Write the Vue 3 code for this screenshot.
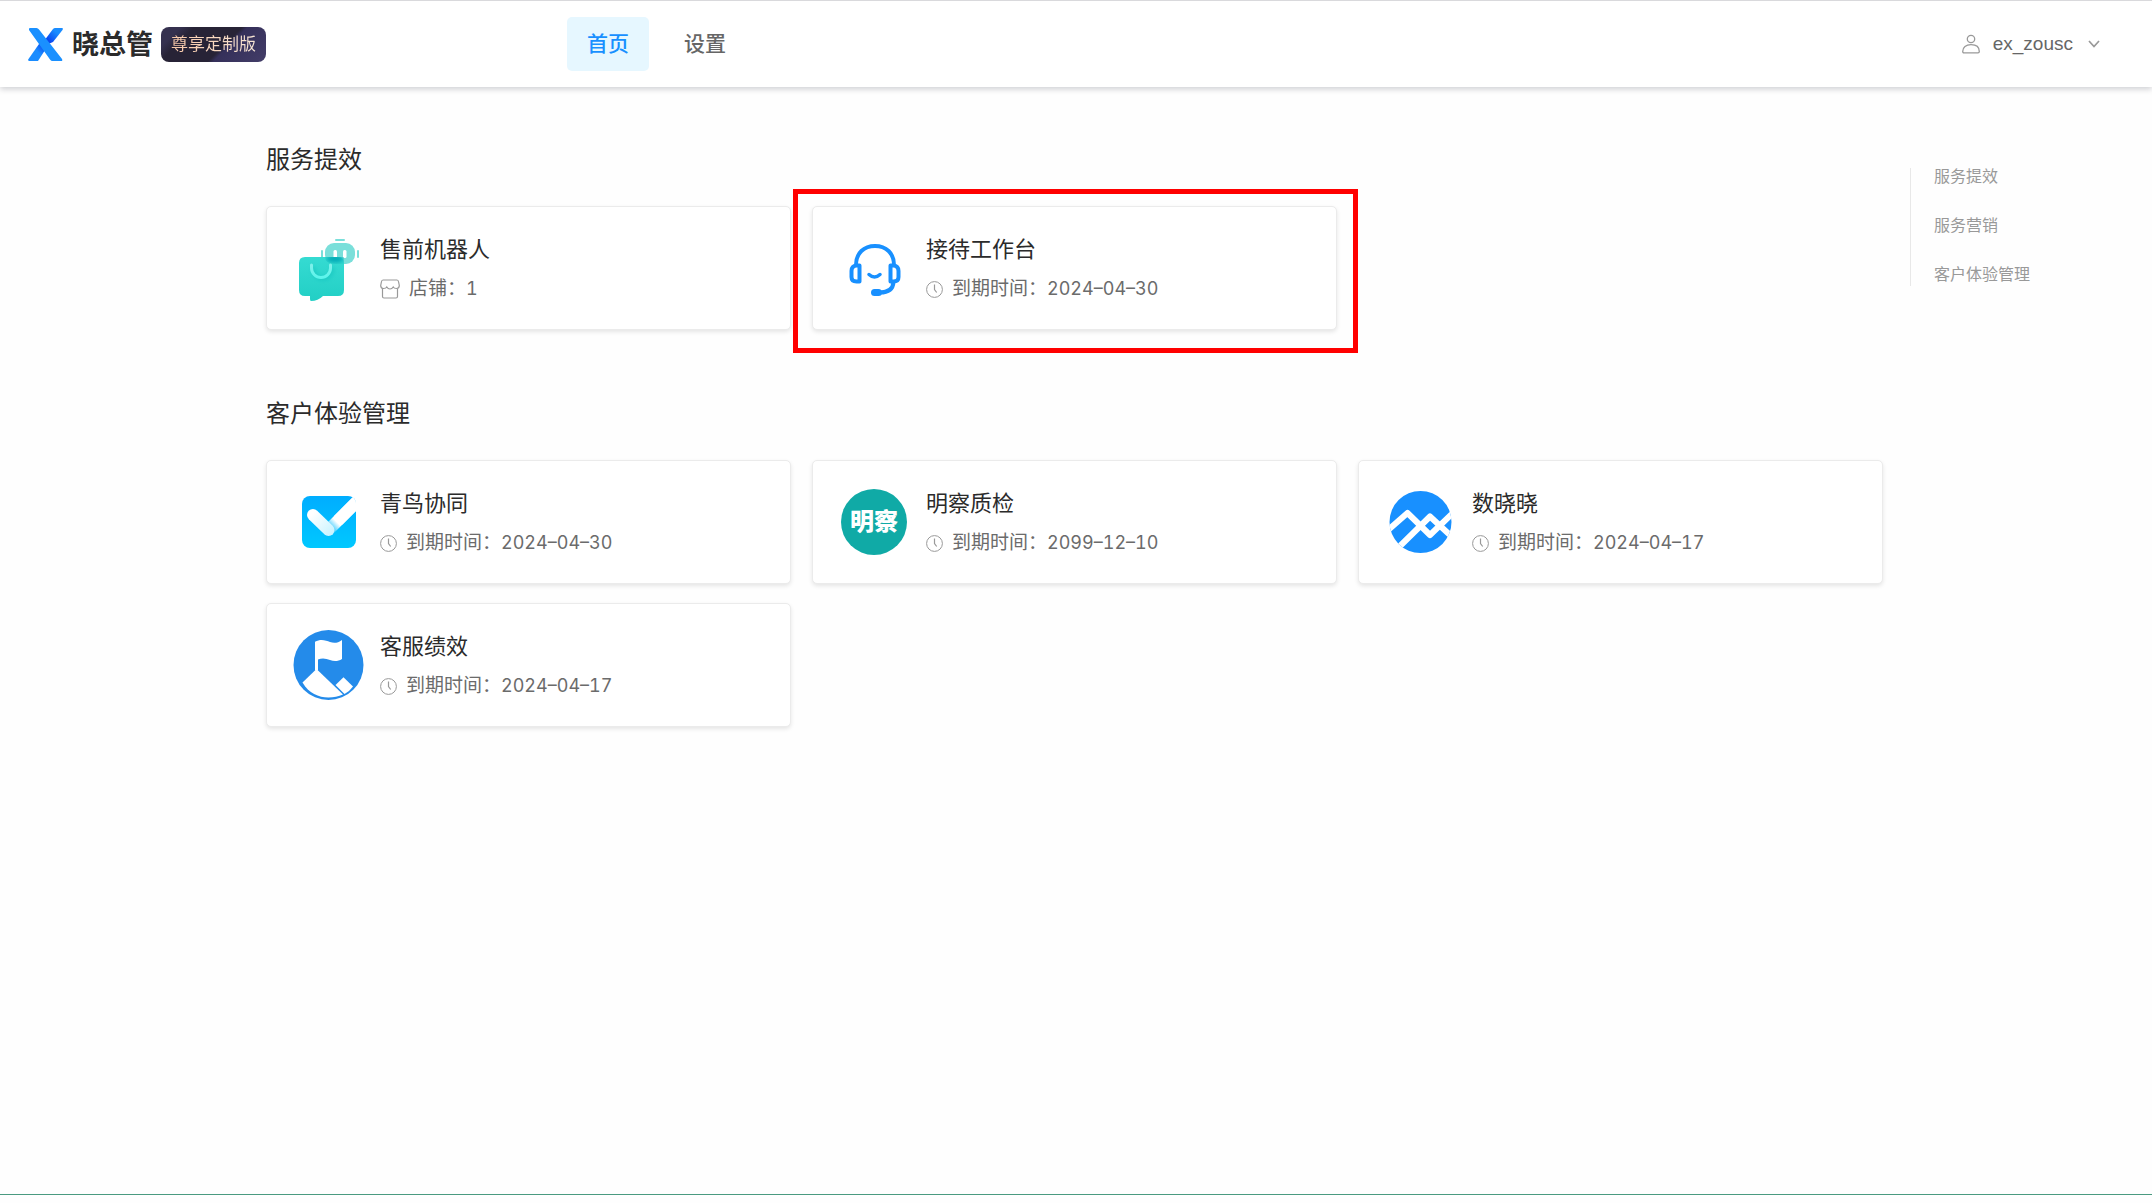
<script setup>
import { ref } from 'vue'

const sections = [
  {
    id: 'service',
    title: '服务提效',
    cards: [
      { icon: 'robot', name: '售前机器人', kind: 'shop', label: '店铺：', value: '1' },
      { icon: 'headset', name: '接待工作台', kind: 'clock', label: '到期时间：', value: '2024–04–30', marked: true },
    ],
  },
  {
    id: 'experience',
    title: '客户体验管理',
    cards: [
      { icon: 'check', name: '青鸟协同', kind: 'clock', label: '到期时间：', value: '2024–04–30' },
      { icon: 'mingcha', name: '明察质检', kind: 'clock', label: '到期时间：', value: '2099–12–10' },
      { icon: 'data', name: '数晓晓', kind: 'clock', label: '到期时间：', value: '2024–04–17' },
      { icon: 'flag', name: '客服绩效', kind: 'clock', label: '到期时间：', value: '2024–04–17' },
    ],
  },
]

const anchors = [
  { id: 'service', text: '服务提效' },
  { id: 'marketing', text: '服务营销' },
  { id: 'experience', text: '客户体验管理' },
]

const tabs = ['首页', '设置']
const activeTab = ref('首页')
</script>

<template>
  <div class="page">
    <header class="header">
      <div class="brand">
        <svg class="brand-mark" viewBox="0 0 35 33" aria-hidden="true">
          <defs>
            <linearGradient id="armUp" x1="1" y1="0" x2="0" y2="1">
              <stop offset="0.3" stop-color="#1a8cff" />
              <stop offset="0.75" stop-color="#0a45f0" />
            </linearGradient>
            <linearGradient id="armDown" x1="1" y1="0" x2="0" y2="1">
              <stop offset="0.15" stop-color="#0a45f0" />
              <stop offset="0.5" stop-color="#1a8cff" />
            </linearGradient>
          </defs>
          <path d="M25 1Q26 0 27 0H34Q35.500 0 34.500 2L25 14L18 17L16 13Z" fill="url(#armUp)" />
          <path d="M10 33H1Q-0.500 32.500 0.500 31L11 16L18 14L19 19Z" fill="url(#armDown)" />
          <path d="M2 0H8.500Q10 0 11 1.500L34 31Q35 33 33 33H24.500Q23 33 22 31.500L1 2Q0.500 0 2 0Z" fill="#1a90ff" />
        </svg>
        <span class="brand-name">晓总管</span>
        <span class="badge"><span class="badge-text">尊享定制版</span></span>
      </div>
      <nav class="tabs" aria-label="主导航">
        <button
          v-for="tab in tabs"
          :key="tab"
          type="button"
          class="tab"
          :class="{ active: tab === activeTab }"
          @click="activeTab = tab"
        >{{ tab }}</button>
      </nav>
      <button type="button" class="user">
        <svg class="user-icon" viewBox="0 0 18 20" fill="none" stroke="#999" stroke-width="1.3" aria-hidden="true">
          <circle cx="9" cy="5" r="3.700" />
          <path d="M2 18.800Q0.700 18.800 0.700 17.500C0.700 13 4 10.700 9 10.700S17.300 13 17.300 17.500Q17.300 18.800 16 18.800Z" />
        </svg>
        <span>ex_zousc</span>
        <svg class="chevron" viewBox="0 0 12 8" fill="none" stroke="#999" stroke-width="1.700" aria-hidden="true">
          <path d="M1 1L6 6.500L11 1" />
        </svg>
      </button>
    </header>

    <div class="body">
      <main class="main">
        <section v-for="section in sections" :id="section.id" :key="section.id" class="section">
          <h2 class="section-title">{{ section.title }}</h2>
          <div class="grid">
            <a
              v-for="card in section.cards"
              :key="card.name"
              href="#"
              class="card"
              :class="{ marked: card.marked }"
            >
              <svg v-if="card.icon === 'robot'" class="icon" viewBox="0 0 72 72" aria-hidden="true">
                <defs>
                  <linearGradient id="bag" x1="0" y1="0" x2="0" y2="1">
                    <stop offset="0" stop-color="#35dbd2" />
                    <stop offset="1" stop-color="#22cfc5" />
                  </linearGradient>
                  <linearGradient id="smile" x1="0" y1="0" x2="0" y2="1">
                    <stop offset="0" stop-color="#7ff0ea" />
                    <stop offset="1" stop-color="#5cf5ec" />
                  </linearGradient>
                  <filter id="soft" x="-30%" y="-60%" width="160%" height="220%"><feGaussianBlur stdDeviation="2" /></filter>
                  <clipPath id="overlap"><path d="M33 25H52V32H43Q33 32 33 25Z" /></clipPath>
                </defs>
                <rect x="33" y="11" width="30" height="21" rx="9" fill="#7adfda" />
                <rect x="43" y="7" width="10" height="2" rx="1" fill="#7adfda" />
                <rect x="29" y="18" width="2" height="8" rx="1" fill="#7adfda" />
                <rect x="65" y="18" width="2" height="8" rx="1" fill="#7adfda" />
                <rect x="41.500" y="18" width="3.500" height="9" rx="1.500" fill="#fff" />
                <rect x="51" y="18" width="3.500" height="8" rx="1.500" fill="#fff" />
                <path d="M13 25H46Q52 25 52 31V58Q52 64 46 64H31Q26 69 19 69Q18 69 18 67V64H13Q7 64 7 58V31Q7 25 13 25Z" fill="url(#bag)" />
                <ellipse cx="43" cy="27" rx="9" ry="3.500" fill="#00a9b5" filter="url(#soft)" clip-path="url(#overlap)" />
                <path d="M21.500 35V37A9.500 9.500 0 0 0 40.500 37V35" fill="none" stroke="#12b7b4" stroke-opacity="0.5" stroke-width="3" filter="url(#soft)" />
                <path d="M19.500 33V36A9.500 9.500 0 0 0 38.500 36V33" fill="none" stroke="url(#smile)" stroke-width="3" stroke-linecap="round" />
              </svg>

              <svg v-else-if="card.icon === 'headset'" class="icon" viewBox="0 0 72 72" fill="none" stroke="#1890ff" stroke-width="4" stroke-linecap="round" stroke-linejoin="round" aria-hidden="true">
                <path d="M18 33C18 21 26 14 37 14S56 21 56 33" />
                <path d="M21.500 33.500H18.500Q13.500 34 13.500 39V45Q13.500 49.500 18.500 49.500H21.500Z" />
                <path d="M52.500 33.500H55.500Q60.500 34 60.500 39V45Q60.500 49.500 55.500 49.500H52.500Z" />
                <path d="M31 42.500Q36.500 47.500 42 42.500" stroke-width="3.500" />
                <path d="M55.500 50C55 57 51 60.500 42 60.500" />
                <path d="M36.500 60.500H40.500" stroke-width="7" />
              </svg>

              <svg v-else-if="card.icon === 'check'" class="icon" viewBox="0 0 72 72" aria-hidden="true">
                <defs>
                  <linearGradient id="sky" x1="0" y1="0" x2="0" y2="1">
                    <stop offset="0" stop-color="#00adff" />
                    <stop offset="1" stop-color="#00c8ff" />
                  </linearGradient>
                  <linearGradient id="arm" gradientUnits="userSpaceOnUse" x1="20" y1="28" x2="40" y2="48">
                    <stop offset="0" stop-color="#fff" />
                    <stop offset="1" stop-color="#c9f3ff" />
                  </linearGradient>
                  <linearGradient id="longArm" gradientUnits="userSpaceOnUse" x1="37" y1="44" x2="47" y2="34">
                    <stop offset="0" stop-color="#fff" stop-opacity="0" />
                    <stop offset="0.8" stop-color="#fff" />
                  </linearGradient>
                  <clipPath id="tile"><rect x="10" y="10" width="54" height="52" rx="8" /></clipPath>
                </defs>
                <rect x="10" y="10" width="54" height="52" rx="8" fill="url(#sky)" />
                <g clip-path="url(#tile)" fill="none" stroke-width="12" stroke-linecap="round">
                  <path d="M37 43.500L70 10.500" stroke="url(#longArm)" />
                  <path d="M21 29L36.500 44" stroke="url(#arm)" />
                  <path d="M46 34.500L70 10.500" stroke="#fff" stroke-linecap="butt" />
                </g>
              </svg>

              <span v-else-if="card.icon === 'mingcha'" class="icon"><span class="disc">明察</span></span>

              <svg v-else-if="card.icon === 'data'" class="icon" viewBox="0 0 72 72" aria-hidden="true">
                <defs><clipPath id="globe"><circle cx="36.500" cy="36" r="31" /></clipPath></defs>
                <g clip-path="url(#globe)">
                  <rect x="5" y="4" width="64" height="64" fill="#1890ff" />
                  <g fill="none" stroke="#fff" stroke-width="6" stroke-linejoin="round">
                    <path d="M3 45L23.500 27L46 49L70 26" />
                    <path d="M14 62L46 30.500L66 49" />
                  </g>
                </g>
              </svg>

              <svg v-else class="icon" viewBox="0 0 72 72" aria-hidden="true">
                <circle cx="36.500" cy="36" r="35" fill="#248bea" />
                <g fill="#fff">
                  <path d="M23 12.700C29 9.500 34 11.500 38 13S46 14 50 11V30C46 32.500 42 32.500 38 31S30 29 26 30.500V41H23Z" />
                  <path d="M24.500 40L51 65.500C38 71 20 70 10.500 53.500Z" />
                  <path d="M51.500 48.300L61 57.500Q57.500 62.500 52.500 65L43.500 56Z" />
                </g>
              </svg>

              <span class="text">
                <span class="name">{{ card.name }}</span>
                <span class="meta">
                  <svg v-if="card.kind === 'clock'" class="clock" viewBox="0 0 17 17" fill="none" stroke="#999" aria-hidden="true">
                    <circle cx="8.500" cy="8.500" r="7.900" />
                    <path d="M8.500 3.500V8.500L10.700 11.500" stroke-width="1.200" />
                  </svg>
                  <svg v-else class="shop" viewBox="0 0 20 20" fill="none" stroke="#999" stroke-width="1.200" aria-hidden="true">
                    <path d="M3 1H17Q18.300 1 18.600 3L19.300 6.500Q19.300 9.500 16.500 9.500Q14 9.500 13.200 8Q12 10 10 10T6.800 8Q6 9.500 3.500 9.500Q0.700 9.500 0.700 6.500L1.400 3Q1.700 1 3 1Z" />
                    <path d="M2.500 9.500V17.500Q2.500 19 4 19H16Q17.500 19 17.500 17.500V9.500" />
                  </svg>
                  <span>{{ card.label }}<span class="value">{{ card.value }}</span></span>
                </span>
              </span>
            </a>
          </div>
        </section>
      </main>

      <nav class="aside" aria-label="页内导航">
        <ul class="anchors">
          <li v-for="item in anchors" :key="item.id">
            <a :href="'#' + item.id">{{ item.text }}</a>
          </li>
        </ul>
      </nav>
    </div>

    <footer class="footer"></footer>
  </div>
</template>

<style>
body {
  margin: 0;
  background: #fefefe;
}
</style>

<style scoped>
.page {
  display: flex;
  flex-direction: column;
  min-height: 100vh;
  box-sizing: border-box;
  font-family: "Liberation Sans", "Noto Sans CJK SC", sans-serif;
  color: #2b2b2b;
}

button {
  border: 0;
  background: none;
  font: inherit;
  cursor: pointer;
}

a {
  color: inherit;
  text-decoration: none;
}

.header {
  display: flex;
  align-items: center;
  height: 86px;
  padding: 0 52px 0 28px;
  border-top: 1px solid #d9d9dc;
  background: #fff;
  box-shadow: 0 2px 6px rgba(0, 10, 30, 0.2);
}

.brand {
  display: flex;
  align-items: center;
  width: 539px;
}

.brand-mark {
  width: 35px;
  height: 33px;
}

.brand-name {
  margin-left: 9px;
  padding-top: 2px;
  font-size: 27px;
  line-height: 36px;
  font-weight: 700;
}

.badge {
  margin-left: 8px;
  padding: 0 10px;
  border-radius: 8px;
  background: linear-gradient(135deg, #35314f 0 14%, #272336 24% 58%, #35305a 62%, #433d68 100%);
  font-size: 17px;
  line-height: 35px;
}

.badge-text {
  background: linear-gradient(90deg, #f9c8a8, #f7e6d6);
  background-clip: text;
  color: transparent;
}

.tabs {
  display: flex;
  gap: 15px;
  flex: 1;
}

.tab {
  padding: 0 20px;
  border-radius: 5px;
  font-size: 21px;
  line-height: 54px;
  font-weight: 500;
  color: #666;
}

.tab.active {
  background: #e6f7ff;
  color: #1890ff;
}

.user {
  display: flex;
  align-items: center;
  padding: 0;
  font-size: 19px;
  line-height: 28px;
  color: #666;
}

.user-icon {
  width: 18px;
  height: 20px;
  margin-right: 13px;
}

.chevron {
  width: 12px;
  height: 8px;
  margin-left: 15px;
}

.body {
  display: flex;
  flex: 1;
  padding-left: 266px;
}

.main {
  flex: 1;
  padding-top: 55px;
}

.section {
  margin-bottom: 66px;
}

.section-title {
  margin: 0 0 28px;
  font-size: 24px;
  line-height: 36px;
  font-weight: 400;
}

.grid {
  display: grid;
  grid-template-columns: repeat(3, 1fr);
  gap: 19px 21px;
}

.card {
  position: relative;
  display: flex;
  align-items: center;
  gap: 16px;
  height: 124px;
  box-sizing: border-box;
  padding-left: 25px;
  border: 1px solid #ebebeb;
  border-radius: 5px;
  background: #fff;
  box-shadow: 0 2px 4px rgba(0, 0, 0, 0.1);
}

.marked::after {
  content: "";
  position: absolute;
  inset: -18px -22px -24px -20px;
  border: 5px solid #f00;
}

.icon {
  display: flex;
  align-items: center;
  justify-content: center;
  flex: none;
  width: 72px;
  height: 72px;
}

.disc {
  width: 66px;
  border-radius: 50%;
  background: #10aaa6;
  color: #fff;
  font-size: 24px;
  line-height: 66px;
  font-weight: 900;
  text-align: center;
}

.text {
  display: flex;
  flex-direction: column;
  gap: 10px;
  padding-top: 2px;
}

.name {
  font-size: 22px;
  line-height: 30px;
}

.meta {
  display: flex;
  align-items: center;
  font-size: 19px;
  line-height: 28px;
  color: #6b6b6b;
}

.value {
  font-family: Inter, "Liberation Sans", sans-serif;
  font-size: 18px;
  font-variant-numeric: tabular-nums;
}

.clock {
  width: 17px;
  height: 17px;
  margin-right: 9px;
}

.shop {
  width: 20px;
  height: 20px;
  margin-right: 9px;
}

.aside {
  width: 242px;
  margin-left: 27px;
  padding-top: 81px;
}

.anchors {
  display: flex;
  flex-direction: column;
  gap: 32px;
  margin: 0;
  padding: 0 0 3px 23px;
  border-left: 1px solid #e8e8e8;
  list-style: none;
  font-size: 16px;
  line-height: 17px;
  color: #999;
}

.footer {
  height: 8px;
  border-top: 1px solid #4a9a80;
}
</style>
